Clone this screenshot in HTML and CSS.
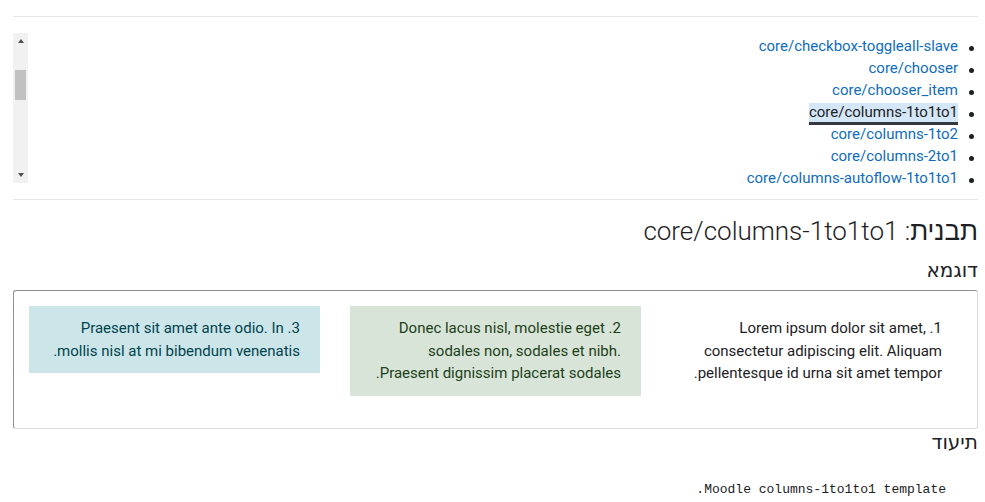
FILE: index.html
```html
<!DOCTYPE html>
<html lang="he" dir="rtl">
<head>
    <meta charset="utf-8">
    <title>ספריית תבניות</title>
    <link rel="stylesheet" href="styles.css">
</head>
<body>
    <div class="page">
        <hr class="rule">
        <div class="scroller">
            <div class="templates" id="templates">
                <ul class="template-list">
                    <li><a href="#">core/chart</a></li>
                    <li><a href="#">core/chart_output_chartjs</a></li>
                    <li><a href="#">core/chart_output_htmltable</a></li>
                    <li><a href="#">core/checkbox-toggleall</a></li>
                    <li><a href="#">core/checkbox-toggleall-master</a></li>
                    <li><a href="#">core/checkbox-toggleall-slave</a></li>
                    <li><a href="#">core/chooser</a></li>
                    <li><a href="#">core/chooser_item</a></li>
                    <li><a href="#" class="current">core/columns-1to1to1</a></li>
                    <li><a href="#">core/columns-1to2</a></li>
                    <li><a href="#">core/columns-2to1</a></li>
                    <li><a href="#">core/columns-autoflow-1to1to1</a></li>
                    <li><a href="#">core/comboboxsearch</a></li>
                    <li><a href="#">core/comment</a></li>
                    <li><a href="#">core/confirm</a></li>
                    <li><a href="#">core/content_item</a></li>
                    <li><a href="#">core/contentbank</a></li>
                    <li><a href="#">core/context_header</a></li>
                    <li><a href="#">core/copy_box</a></li>
                    <li><a href="#">core/custom_menu_item</a></li>
                    <li><a href="#">core/datafilter/filter</a></li>
                    <li><a href="#">core/dataformat_selector</a></li>
                    <li><a href="#">core/date_range_picker</a></li>
                    <li><a href="#">core/dialogue</a></li>
                    <li><a href="#">core/downloadlink</a></li>
                    <li><a href="#">core/drawer</a></li>
                    <li><a href="#">core/dropdown/dialog</a></li>
                </ul>
            </div>
            <div class="scrollbar">
                <span class="arrow arrow-up"></span>
                <span class="thumb"></span>
                <span class="arrow arrow-down"></span>
            </div>
        </div>
        <hr class="rule">
        <h2 class="title">תבנית: core/columns-1to1to1</h2>
        <h3 class="section">דוגמא</h3>
        <div class="example">
            <div class="col">1. Lorem ipsum dolor sit amet, consectetur adipiscing elit. Aliquam pellentesque id urna sit amet tempor.</div>
            <div class="col col-green">2. Donec lacus nisl, molestie eget sodales non, sodales et nibh. Praesent dignissim placerat sodales.</div>
            <div class="col col-blue">3. Praesent sit amet ante odio. In mollis nisl at mi bibendum venenatis.</div>
        </div>
        <h3 class="section section-docs">תיעוד</h3>
        <pre class="docs">Moodle columns-1to1to1 template.</pre>
    </div>
    <script>
        // keep the list scrolled down to the selected template, as in the library
        document.getElementById("templates").scrollTop = 106;
    </script>
</body>
</html>
```

FILE: styles.css
```css
body {
    margin: 0;
    font-family: Roboto, "Noto Sans", "DejaVu Sans", sans-serif;
    font-size: 15px;
    line-height: 1.5;
    color: #1d2125;
    background: #fff;
}

.page {
    margin: 0 7px 0 13px;
}

.rule {
    height: 0;
    margin: 16px 0;
    border: 0;
    border-top: 1px solid #e6e6e6;
}

.scroller {
    display: flex;
    height: 150px;
}

.templates {
    flex: 1;
    overflow: hidden;
}

.template-list {
    margin: 0;
    padding: 0 4px 6px 0;
    list-style: none;
}

.template-list li {
    line-height: 22px;
}

.template-list li::before {
    content: "";
    display: inline-block;
    width: 5px;
    height: 5px;
    margin: 0 0 2px 11px;
    border-radius: 50%;
    background: #1d2125;
    vertical-align: middle;
}

.template-list a {
    display: inline-block;
    vertical-align: top;
    line-height: 19px;
    border-bottom: 3px solid transparent;
    color: #0f6cbf;
    text-decoration: none;
}

.template-list a.current {
    background: #d4e7f8;
    border-bottom-color: #343a40;
    color: #1d2125;
}

.scrollbar {
    display: flex;
    flex-direction: column;
    align-items: center;
    width: 15px;
    background: #f1f1f1;
}

.arrow {
    width: 0;
    height: 0;
    border-left: 3.5px solid transparent;
    border-right: 3.5px solid transparent;
}

.arrow-up {
    margin-top: 6px;
    border-bottom: 4px solid #505050;
}

.arrow-down {
    margin: auto 0 6px;
    border-top: 4px solid #505050;
}

.thumb {
    width: 11px;
    height: 30px;
    margin-top: 27px;
    background: #c1c1c1;
}

.title {
    margin: 0 0 11px;
    font-size: 26px;
    font-weight: 300;
    line-height: 1.2;
}

.section {
    margin: 0 0 8px;
    font-size: 20px;
    font-weight: 400;
    line-height: 24px;
}

.section-docs {
    margin-top: 1px;
}

.example {
    display: grid;
    grid-template-columns: repeat(3, 1fr);
    gap: 30px;
    align-items: start;
    padding: 15px 15px 32px;
    border: 1px solid;
    border-color: #8f8f8f #dcdcdc #dcdcdc #8f8f8f;
    border-radius: 3px;
}

.col {
    padding: 11px 20px;
    line-height: 22.5px;
}

.col-green {
    background: #d8e4d7;
    color: #1c3f1a;
}

.col-blue {
    background: #cce5e9;
    color: #00434e;
}

.docs {
    margin: 28px 0 0;
    padding-right: 32px;
    font-family: "Liberation Mono", monospace;
    font-size: 13px;
    line-height: 15px;
    color: #1d2125;
}
```
